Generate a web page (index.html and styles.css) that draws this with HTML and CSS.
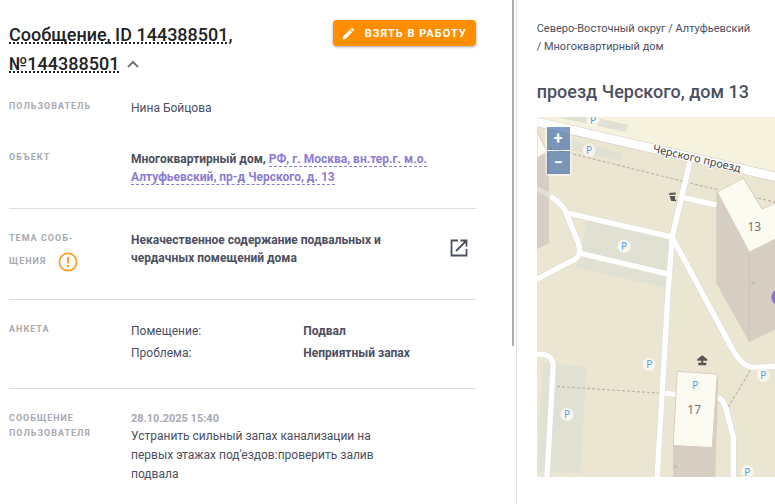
FILE: index.html
```
<!DOCTYPE html>
<html lang="ru">
<head>
    <meta charset="UTF-8">
    <meta name="viewport" content="width=device-width, initial-scale=1.0">
    <title>Сообщение 144388501</title>
    <link rel="stylesheet" href="styles.css">
</head>
<body>
    <div class="layout">
        <main class="message">
            <div class="scroll-thumb"></div>
            <header class="message-header">
                <h1 class="title">
                    <span class="copyable">Сообщение, ID 144388501</span>, <span class="copyable">№144388501</span>
                    <svg class="chevron" viewBox="0 0 12 8"><path d="M1 7l5-5 5 5" fill="none" stroke="#777" stroke-width="2"/></svg>
                </h1>
                <button class="take-btn" type="button">
                    <svg viewBox="0 0 24 24" width="15" height="15"><path fill="#fff" d="M3 17.25V21h3.75L17.81 9.94l-3.75-3.75L3 17.25zM20.71 7.04a1 1 0 0 0 0-1.41l-2.34-2.34a1 1 0 0 0-1.41 0l-1.83 1.83 3.75 3.75 1.83-1.83z"/></svg>
                    Взять в работу
                </button>
            </header>

            <section class="row">
                <h2 class="label">Пользователь</h2>
                <div class="value">Нина Бойцова</div>
            </section>

            <section class="row">
                <h2 class="label">Объект</h2>
                <div class="value strong">Многоквартирный дом, <a class="address" href="#">РФ, г. Москва, вн.тер.г. м.о. Алтуфьевский, пр-д Черского, д. 13</a></div>
            </section>

            <section class="row divided">
                <h2 class="label">Тема сооб-<br>щения
                    <svg class="warn" viewBox="0 0 20 20"><circle cx="10" cy="10" r="8.6" fill="none" stroke="#ff9d2b" stroke-width="1.8"/><path d="M10 5v6.400M10 13v2" stroke="#ff9d2b" stroke-width="2"/></svg>
                </h2>
                <div class="value strong topic">
                    <span>Некачественное содержание подвальных и чердачных помещений дома</span>
                    <a class="open" href="#" aria-label="Открыть">
                        <svg viewBox="0 0 18 18" width="18" height="18"><path d="M8 1.500H1.500V16.500H16.500V10M10.500 1.500H16.500V7.500M16 2L6 12" fill="none" stroke="#4b4f60" stroke-width="1.800"/></svg>
                    </a>
                </div>
            </section>

            <section class="row divided">
                <h2 class="label">Анкета</h2>
                <dl class="value form">
                    <dt>Помещение:</dt><dd>Подвал</dd>
                    <dt>Проблема:</dt><dd>Неприятный запах</dd>
                </dl>
            </section>

            <section class="row divided">
                <h2 class="label">Сообщение пользователя</h2>
                <div class="value">
                    <time class="date">28.10.2025 15:40</time>
                    <p class="text">Устранить сильный запах канализации на первых этажах под'ездов:проверить залив подвала</p>
                </div>
            </section>
        </main>

        <aside class="place">
            <nav class="crumbs">Северо-Восточный округ / Алтуфьевский / Многоквартирный дом</nav>
            <h2 class="place-title">проезд Черского, дом 13</h2>
            <div class="map">
                <svg class="map-canvas" viewBox="0 0 238 360" preserveAspectRatio="xMinYMin slice">
                    <defs>
                        <g id="parking">
                            <circle r="6.500" fill="#f7f5ee"/>
                            <text class="parking-sign" y="4" text-anchor="middle">P</text>
                        </g>
                        <g id="roads">
                            <path d="M13 79Q22 84 28 93L41 125Q44 134 41 139Q39 142 34 144L0 162"/>
                            <path d="M31 96L135 120M43 136L131 157"/>
                            <path d="M153 43L135 120L131 173L120 360"/>
                            <path d="M145 80L179 88"/>
                            <path d="M135 120L194 230Q205 250 216 250L238 249"/>
                            <path d="M128 276L139 277M181 280Q186 282 189 292L196 320V360"/>
                            <path d="M0 237Q17 236 16 250L10 360"/>
                        </g>
                    </defs>
                    <rect width="240" height="360" fill="#ebe6d2"/>
                    <path d="M0 0H240V60L0 5z" fill="#f5f2de"/>
                    <!-- parking lots -->
                    <g fill="#e1e1d3">
                        <path d="M20 0H56L91 8L89 15L28 2z"/>
                        <path d="M25 21L85 36L83 44L22 30z"/>
                        <path d="M49 102L134 122L131 157L44 136z"/>
                        <path d="M40 139L131 160L130 171L39 150z"/>
                        <path d="M6 246L50 249L43 356L0 354V350z"/>
                    </g>
                    <!-- footpaths -->
                    <g fill="none" stroke="#bdb5a5" stroke-width="1.200" stroke-dasharray="3 2">
                        <path d="M12 31L145 64L182 73M216 80L238 85"/>
                        <path d="M20 269L127 276M213 253L190 291"/>
                    </g>
                    <!-- houses: shadow, then roads, then roof -->
                    <g fill="#d6cec2">
                        <path d="M0 41L10 36H12V126L0 132z"/>
                        <path d="M179 75V166L212 225L240 211V120z"/>
                        <path d="M136 327V360H178L181 260z"/>
                    </g>
                    <path d="M0 72L12 78" stroke="#e3ded5" stroke-width="5"/>
                    <path d="M212 135V225" stroke="#cdc5b9"/>
                    <g fill="none" stroke-linejoin="round">
                        <use href="#roads" stroke="#dddad0" stroke-width="6.400"/>
                        <path d="M0 5L240 60" stroke="#d8d5cc" stroke-width="10"/>
                        <path d="M0 5L240 60" stroke="#fff" stroke-width="8.500"/>
                        <use href="#roads" stroke="#fff" stroke-width="5.400"/>
                    </g>
                    <g fill="#fcfbf2" stroke="#d8cfc0" stroke-linejoin="round">
                        <path d="M0 13L10 35L0 41z"/>
                        <path d="M180 75L206 61L225 92L240 85V121L212 135z"/>
                        <path d="M140 254L180 257L175 330L136 328z"/>
                    </g>
                    <circle cx="216" cy="166" r="1.800" fill="#c6beb3"/>
                    <circle cx="138" cy="349" r="1.800" fill="#c6beb3"/>
                    <!-- waste bin -->
                    <path d="M132 76L138.500 75.500V77.500L132 78zM132.500 79H138L137.500 84H134z" fill="#555"/>
                    <circle cx="138" cy="83.500" r="1" fill="#555"/>
                    <!-- gazebo -->
                    <path d="M165 238L170 242V243.500H166V245.500H169V248H161V245.500H164V243.500H160V242z" fill="#555"/>
                    <use href="#parking" x="56" y="3"/>
                    <use href="#parking" x="52" y="33"/>
                    <use href="#parking" x="87" y="129"/>
                    <use href="#parking" x="112" y="247"/>
                    <use href="#parking" x="30" y="297"/>
                    <use href="#parking" x="158" y="268"/>
                    <use href="#parking" x="226" y="258"/>
                    <use href="#parking" x="210" y="354"/>
                    <text class="house" x="217" y="114">13</text>
                    <text class="house" x="157" y="297">17</text>
                    <text class="street" transform="translate(115 35) rotate(13)">Черского проезд</text>
                    <circle cx="242" cy="180" r="8" fill="#8a6fd3"/>
                </svg>
                <div class="zoom">
                    <button type="button" aria-label="Приблизить">+</button>
                    <button type="button" aria-label="Отдалить">−</button>
                </div>
            </div>
        </aside>
    </div>
</body>
</html>
```
FILE: styles.css
```
* {
    box-sizing: border-box;
}

body {
    margin: 0;
    font-family: Roboto, sans-serif;
    font-size: 12px;
    line-height: 18px;
    color: #4b4f60;
    background-color: #fff;
}

h1, h2, p, dl, dd {
    margin: 0;
}

.layout {
    display: grid;
    grid-template-columns: 2fr 1fr;
    min-height: 100vh;
}

.message {
    position: relative;
    padding: 20px 40px 20px 9px;
    border-right: 1px solid #dedee2;
}

.scroll-thumb {
    position: absolute;
    top: 0;
    right: 2px;
    width: 2px;
    height: 346px;
    background-color: #acabb3;
}

.message-header {
    display: flex;
    justify-content: space-between;
    align-items: flex-start;
    margin-bottom: 21px;
}

.title {
    width: 240px;
    font-size: 18px;
    font-weight: 500;
    line-height: 29px;
    color: #222;
}

.copyable {
    text-decoration: underline dotted 2px;
    text-decoration-skip-ink: none;
}

.chevron {
    width: 12px;
    height: 8px;
    margin-left: 3px;
    vertical-align: 2px;
}

.take-btn {
    display: flex;
    align-items: center;
    gap: 9px;
    height: 26px;
    padding: 0 9px 0 8px;
    border: 0;
    border-radius: 4px;
    background-color: #ff8f00;
    box-shadow: 0 1px 3px rgba(0, 0, 0, 0.35);
    font-family: inherit;
    font-size: 11px;
    font-weight: 700;
    letter-spacing: 1px;
    text-transform: uppercase;
    white-space: nowrap;
    color: #fff;
    cursor: pointer;
}

.row {
    display: grid;
    grid-template-columns: 122px 1fr;
    margin-bottom: 22px;
}

.row + .row {
    margin-top: 33px;
}

.row.divided {
    margin-top: 0;
    padding-top: 22px;
    border-top: 1px solid #dedede;
}

.label {
    font-size: 9px;
    font-weight: 700;
    line-height: 15px;
    letter-spacing: 1px;
    text-transform: uppercase;
    color: #a8a9b1;
}

.warn {
    width: 20px;
    height: 20px;
    margin: 6px 0 5px 9px;
    vertical-align: middle;
}

.strong {
    font-weight: 700;
}

.address {
    color: #8d7bd0;
    text-decoration: none;
    border-bottom: 1px dashed #8d7bd0;
}

.topic {
    display: flex;
    justify-content: space-between;
    align-items: flex-start;
    gap: 40px;
    padding-right: 8px;
}

.open {
    display: flex;
    margin-top: 8px;
}

.form {
    display: grid;
    grid-template-columns: 1fr 1fr;
    row-gap: 4px;
    margin-bottom: 4px;
}

.form dd {
    font-weight: 700;
}

.date {
    display: block;
    font-size: 11px;
    font-weight: 700;
    line-height: 16px;
    color: #a8a9b1;
}

.text {
    max-width: 270px;
    line-height: 19px;
}

.place {
    min-width: 0;
    padding: 20px 0 20px 20px;
}

.crumbs {
    padding-right: 19px;
    font-size: 11px;
}

.place-title {
    margin: 24px 0 14px;
    font-size: 18px;
    font-weight: 500;
    line-height: 23px;
}

.map {
    position: relative;
    height: 360px;
    overflow: hidden;
}

.map-canvas {
    display: block;
    width: 100%;
    height: 100%;
}

.parking-sign {
    font: 10px "Noto Sans", sans-serif;
    fill: #4ba3e3;
}

.house {
    font: 12px "Noto Sans", sans-serif;
    fill: #777;
    text-anchor: middle;
}

.street {
    font: 11px "Noto Sans", sans-serif;
    fill: #444;
    stroke: #fff;
    stroke-width: 2px;
    paint-order: stroke;
}

.zoom {
    position: absolute;
    top: 8px;
    left: 8px;
    display: grid;
    gap: 1px;
    padding: 2px;
    border-radius: 4px;
    background-color: rgba(255, 255, 255, 0.4);
}

.zoom button {
    width: 23px;
    height: 23px;
    padding: 0;
    border: 0;
    background-color: rgba(0, 60, 136, 0.5);
    font: 700 16px/20px Roboto, sans-serif;
    color: #fff;
    cursor: pointer;
}
```
